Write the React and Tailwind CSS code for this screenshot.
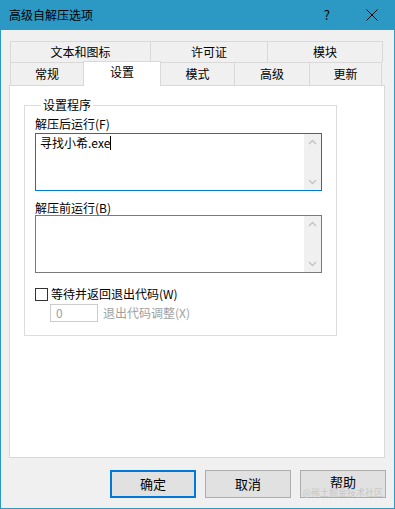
import React from 'react';

const font = "font-['Microsoft_YaHei','Noto_Sans_CJK_SC',sans-serif]";

function Scrollbar() {
  return (
    <div className="flex w-[17px] flex-col items-center justify-between bg-[#f0f0f0] py-[5px]">
      <svg width="9" height="6" viewBox="0 0 9 6">
        <path d="M1 5 L4.5 1.5 L8 5" fill="none" stroke="#c2c2c2" strokeWidth="1.3" />
      </svg>
      <svg width="9" height="6" viewBox="0 0 9 6">
        <path d="M1 1 L4.5 4.5 L8 1" fill="none" stroke="#c2c2c2" strokeWidth="1.3" />
      </svg>
    </div>
  );
}

export default function App() {
  const topTabs = [
    { label: '文本和图标', w: 'w-[140px]' },
    { label: '许可证', w: 'w-[117px]' },
    { label: '模块', w: 'w-[116px]' },
  ];

  return (
    <div className={`relative flex h-[509px] w-[395px] flex-col border-x border-b border-[#2c98c4] bg-[#f0f0f0] text-[12px] text-black ${font}`}>
      {/* Title bar */}
      <div className="flex h-[30px] items-center bg-[#2c98c4] pl-[8px]">
        <span className="leading-[16px]">高级自解压选项</span>
        <span className="ml-auto mr-[36px] text-[13px] leading-[16px]">?</span>
        <svg width="12" height="12" viewBox="0 0 12 12" className="mr-[16px]">
          <path d="M0.5 0.5 L11.5 11.5 M11.5 0.5 L0.5 11.5" stroke="#000" strokeWidth="1" />
        </svg>
      </div>

      <div className="flex flex-1 flex-col px-[8px] pt-[11px]">
        {/* Tabs */}
        <div className="flex pl-[1px]">
          {topTabs.map((t, i) => (
            <div
              key={t.label}
              className={`flex h-[21px] items-center justify-center border-l border-t border-[#d9d9d9] leading-[16px] ${t.w} ${i === topTabs.length - 1 ? 'border-r' : ''}`}
            >
              {t.label}
            </div>
          ))}
        </div>
        <div className="relative z-10 flex h-[23px] pl-[1px]">
          <div className="flex h-[23px] w-[73px] items-center justify-center border-l border-t border-[#d9d9d9] leading-[16px]">常规</div>
          <div className="-mt-[1px] flex h-[25px] w-[78px] items-start justify-center border-x border-t border-[#d9d9d9] bg-white pt-[2px] leading-[16px]">设置</div>
          <div className="flex h-[23px] w-[73px] items-center justify-center border-t border-[#d9d9d9] leading-[16px]">模式</div>
          <div className="flex h-[23px] w-[75px] items-center justify-center border-l border-t border-[#d9d9d9] leading-[16px]">高级</div>
          <div className="flex h-[23px] w-[73px] items-center justify-center border-x border-t border-[#d9d9d9] leading-[16px]">更新</div>
        </div>

        {/* Panel */}
        <div className="h-[373px] w-[376px] border border-[#d9d9d9] bg-white pl-[14px] pt-[11px]">
          <fieldset className="h-[239px] w-[313px] border border-[#dcdcdc] px-[10px]">
            <legend className="ml-[6px] px-[2px] leading-[16px]">设置程序</legend>
            <div className="mt-[3px] leading-[16px]">解压后运行(F)</div>
            <div className="mt-[1px] flex h-[58px] w-[287px] border border-[#0078d7]">
              <div className="flex flex-1 items-start pl-[4px] pt-[1px] leading-[16px]">
                <span>寻找小希.exe</span>
                <span className="mt-[1px] h-[14px] w-[1px] bg-black" />
              </div>
              <Scrollbar />
            </div>
            <div className="mt-[9px] leading-[16px]">解压前运行(B)</div>
            <div className="mt-[-1px] flex h-[58px] w-[287px] border border-[#7a7a7a]">
              <div className="flex-1" />
              <Scrollbar />
            </div>
            <div className="mt-[14px] flex h-[14px] items-center">
              <div className="h-[13px] w-[13px] border border-[#333333] bg-white" />
              <span className="ml-[3px] leading-[16px]">等待并返回退出代码(W)</span>
            </div>
            <div className="mt-[3px] flex items-center pl-[15px]">
              <div className="flex h-[18px] w-[48px] items-center border border-[#cccccc] pl-[5px] leading-[14px] text-[#a0a0a0]">0</div>
              <span className="ml-[5px] leading-[16px] text-[#a0a0a0]">退出代码调整(X)</span>
            </div>
          </fieldset>
        </div>

        {/* Buttons */}
        <div className="mt-[12px] flex justify-end gap-[9px]">
          <button className="flex h-[28px] w-[86px] items-center justify-center border-2 border-[#0078d7] bg-[#e1e1e1] text-[13px] leading-[16px]">确定</button>
          <button className="flex h-[28px] w-[86px] items-center justify-center border border-[#adadad] bg-[#e1e1e1] text-[13px] leading-[16px]">取消</button>
          <button className="flex h-[28px] w-[86px] items-start justify-center border border-[#adadad] bg-[#e1e1e1] pt-[3px] text-[13px] leading-[16px]">帮助</button>
        </div>
      </div>

      <span className="absolute bottom-[10px] right-[11px] text-[9px] leading-[10px] text-[#c8c8c8]">@稀土掘金技术社区</span>
    </div>
  );
}
